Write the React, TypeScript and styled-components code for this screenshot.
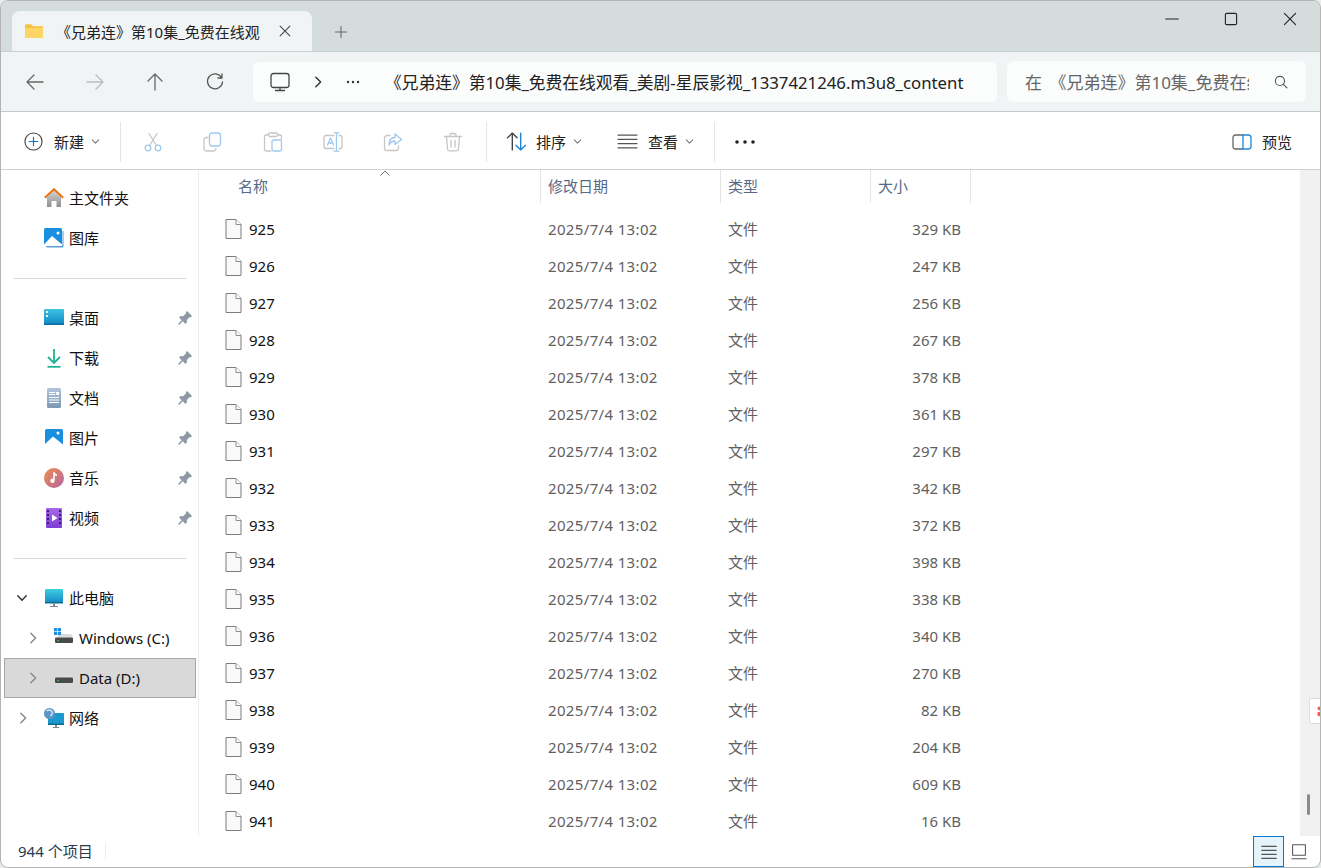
import React from 'react';
import styled, {createGlobalStyle} from 'styled-components';

const Global = createGlobalStyle`
    html, body {
        margin: 0;
        padding: 0;
        background: #e9ecec;
    }
    body {
        font-family: "Noto Sans", "Noto Sans CJK SC", sans-serif;
        font-size: 15px;
        color: #1a1a1a;
    }
`;

const Window = styled.div`
    box-sizing: border-box;
    width: 1321px;
    height: 868px;
    display: flex;
    flex-direction: column;
    border: 1px solid #b4b4b4;
    border-radius: 8px;
    overflow: hidden;
    background: #fff;
`;

const TitleBar = styled.div`
    height: 50px;
    flex: none;
    display: flex;
    align-items: flex-end;
    padding-left: 11px;
    background: #d4dcdc;
`;

const Tab = styled.div`
    width: 300px;
    height: 40px;
    display: flex;
    align-items: center;
    box-sizing: border-box;
    padding-left: 12px;
    background: #f0f4f5;
    border-radius: 8px 8px 0 0;
    font-size: 15px;
    color: #222;
`;

const TabTitle = styled.span`
    margin-left: 12px;
    width: 206px;
    white-space: nowrap;
    overflow: hidden;
`;

const TabClose = styled.span`
    margin-left: 16px;
    display: flex;
`;

const NewTab = styled.span`
    margin: 0 0 12px 22px;
    display: flex;
`;

const WindowControls = styled.div`
    margin-left: auto;
    margin-right: 1px;
    align-self: flex-start;
    display: flex;
    margin-top: 11px;
`;

const WindowControl = styled.span`
    width: 59px;
    height: 14px;
    display: flex;
    justify-content: center;
`;

const NavBar = styled.div`
    height: 61px;
    flex: none;
    box-sizing: border-box;
    display: flex;
    align-items: center;
    background: #f0f4f5;
    border-bottom: 1px solid #c6c9c9;
    border-top: 1px solid #c9d0d0;
    padding-left: 4px;
`;

const NavButton = styled.span`
    width: 60px;
    display: flex;
    justify-content: center;
`;

const AddressBox = styled.div`
    margin-left: 8px;
    width: 744px;
    height: 40px;
    box-sizing: border-box;
    display: flex;
    align-items: center;
    padding-left: 17px;
    background: #fbfcfc;
    border-radius: 6px;
`;

const AddressPart = styled.span<{$width: number}>`
    width: ${p => p.$width}px;
    flex: none;
    display: flex;
    justify-content: center;
`;

const AddressText = styled.span`
    margin-left: 25px;
    width: 580px;
    font-size: 16.75px;
    white-space: nowrap;
    overflow: hidden;
    color: #222;
`;

const SearchBox = styled.div`
    margin-left: 10px;
    width: 299px;
    height: 41px;
    box-sizing: border-box;
    display: flex;
    align-items: center;
    padding-left: 18px;
    background: #fbfcfc;
    border-radius: 6px;
`;

const SearchText = styled.span`
    width: 224px;
    font-size: 17px;
    word-spacing: 3px;
    white-space: nowrap;
    overflow: hidden;
    color: #666;
`;

const SearchIcon = styled.span`
    margin-left: 25px;
    display: flex;
`;

const Toolbar = styled.div`
    height: 58px;
    flex: none;
    box-sizing: border-box;
    display: flex;
    align-items: center;
    padding: 2px 0 0 23px;
    border-bottom: 1px solid #d0d2d2;
    font-size: 14px;
    color: #222;
`;

const ToolLabel = styled.span<{$gap: number}>`
    margin-left: ${p => p.$gap}px;
    font-size: 15px;
`;

const Caret = styled.span`
    margin-left: 7px;
    display: flex;
`;

const ToolDivider = styled.span<{$left: number; $right: number}>`
    width: 1px;
    height: 40px;
    flex: none;
    background: #e4e6e6;
    margin: 0 ${p => p.$right}px 0 ${p => p.$left}px;
`;

const ToolSlot = styled.span`
    width: 60px;
    flex: none;
    display: flex;
    justify-content: center;
`;

const ToolGroup = styled.span<{$left?: number}>`
    display: flex;
    align-items: center;
    margin-left: ${p => p.$left || 0}px;
`;

const PreviewGroup = styled.span`
    margin-left: auto;
    margin-right: 28px;
    display: flex;
    align-items: center;
`;

const Body = styled.div`
    flex: 1;
    min-height: 0;
    display: flex;
`;

const Sidebar = styled.nav`
    width: 198px;
    flex: none;
    box-sizing: border-box;
    padding: 8px 0 0 0;
    border-right: 1px solid #eeeeee;
    margin-bottom: 31px;
`;

const NavRow = styled.div<{$selected?: boolean; $level?: number}>`
    box-sizing: border-box;
    height: 40px;
    display: flex;
    align-items: center;
    margin: 0 2px 0 3px;
    padding-left: ${p => 39 + (p.$level || 0)}px;
    position: relative;
    font-size: 15px;
    color: #111;
    border: 1px solid ${p => (p.$selected ? '#a8a8a8' : 'transparent')};
    background: ${p => (p.$selected ? '#d9d9d9' : 'transparent')};
`;

const NavIcon = styled.span`
    width: 20px;
    height: 20px;
    flex: none;
    display: flex;
`;

const NavLabel = styled.span<{$latin?: boolean}>`
    margin-left: 5px;
    padding-bottom: ${p => (p.$latin ? 0 : 2)}px;
`;

const Pin = styled.span`
    position: absolute;
    left: 172px;
    top: 11px;
    display: flex;
`;

const Expander = styled.span<{$left: number}>`
    position: absolute;
    left: ${p => p.$left}px;
    top: 13px;
    display: flex;
`;

const NavDivider = styled.div`
    height: 1px;
    background: #d8d8d8;
    margin: 20px 12px 19px 13px;
`;

const Main = styled.main`
    flex: 1;
    min-width: 0;
    display: flex;
    flex-direction: column;
    height: 666px;
    overflow: hidden;
`;

const columns = 'grid-template-columns: 342px 180px 150px 100px;';

const HeaderRow = styled.div`
    height: 33px;
    flex: none;
    display: grid;
    ${columns}
    position: relative;
`;

const HeaderCell = styled.div<{$first?: boolean}>`
    box-sizing: border-box;
    display: flex;
    align-items: center;
    height: 33px;
    padding-left: ${p => (p.$first ? 39 : 7)}px;
    border-right: 1px solid #e5e5e5;
    font-size: 15px;
    color: #566a86;
    padding-bottom: 2px;
`;

const SortArrow = styled.span`
    position: absolute;
    left: 180px;
    top: 0;
    display: flex;
`;

const FileList = styled.div`
    padding-top: 7px;
`;

const FileRow = styled.div`
    height: 37px;
    display: grid;
    ${columns}
    align-items: center;
    font-size: 15px;
    color: #5f5f5f;
`;

const NameCell = styled.div`
    display: flex;
    align-items: center;
    padding-left: 26px;
    color: #111;
`;

const FileName = styled.span`
    margin-left: 7px;
`;

const DateCell = styled.div`
    padding-left: 7px;
    letter-spacing: 0.35px;
`;

const TypeCell = styled.div`
    padding-left: 7px;
`;

const SizeCell = styled.div`
    text-align: right;
    padding-right: 10px;
`;

const ScrollTrack = styled.div`
    width: 20px;
    flex: none;
    height: 666px;
    background: #f1f1f1;
    position: relative;
`;

const ScrollThumb = styled.div`
    position: absolute;
    left: 7px;
    top: 624px;
    width: 3px;
    height: 21px;
    border-radius: 2px;
    background: #8b8b8b;
`;

const FloatTab = styled.div`
    position: absolute;
    left: 9px;
    top: 528px;
    width: 14px;
    height: 26px;
    box-sizing: border-box;
    border: 1px solid #dcdcdc;
    border-radius: 2px 0 0 2px;
    background: #fff;
    display: flex;
    align-items: center;
    padding-left: 6px;
`;

const StatusBar = styled.div`
    position: absolute;
    left: 1px;
    bottom: 0;
    width: 1319px;
    height: 32px;
    display: flex;
    align-items: flex-start;
    font-size: 15px;
    color: #26394f;
    background: transparent;
`;

const StatusCount = styled.span`
    margin: 4px 0 0 17px;
`;

const StatusDivider = styled.span`
    margin: 7px 0 0 12px;
    width: 1px;
    height: 16px;
    background: #ececec;
`;

const ViewButtons = styled.span`
    margin-left: auto;
    margin-right: 13px;
    display: flex;
    align-items: center;
    gap: 7px;
`;

const ViewButton = styled.span<{$active?: boolean}>`
    box-sizing: border-box;
    width: 31px;
    height: 31px;
    display: flex;
    align-items: center;
    justify-content: center;
    border: 1px solid ${p => (p.$active ? '#0078d4' : 'transparent')};
    background: ${p => (p.$active ? '#e5f3fb' : 'transparent')};
`;

const Frame = styled.div`
    position: relative;
    width: 1321px;
    height: 868px;
`;

const line = {fill: 'none', strokeLinecap: 'round', strokeLinejoin: 'round'} as const;

const Stroke = ({size = 20, color = '#555', width = 1.3, children}: any) => (
    <svg width={size} height={size} viewBox="0 0 20 20" stroke={color} strokeWidth={width} {...line}>
        {children}
    </svg>
);

const Chevron = ({size = 10, color = '#777', dir = 'down'}: any) => (
    <svg width={size} height={size} viewBox="0 0 10 10" stroke={color} strokeWidth={1.2} {...line}>
        {dir === 'down' ? <path d="M1.5 3.2 5 6.8 8.5 3.2"/> : <path d="M3.2 1 7.2 5 3.2 9"/>}
    </svg>
);

const FolderIcon = () => (
    <svg width="20" height="20" viewBox="0 0 20 20">
        <path d="M1 4.5q0-1.2 1.2-1.2h5l1.8 2h9q1 0 1 1V16q0 1-1 1H2q-1 0-1-1z" fill="#f5c242"/>
        <path d="M1 7h18v9q0 1-1 1H2q-1 0-1-1z" fill="#fcd565"/>
    </svg>
);

const FileIcon = () => (
    <svg width="17" height="20" viewBox="0 0 17 20">
        <path d="M1 .5h10l5 5v14H1z" fill="#f9f9fa" stroke="#7d7d7d"/>
        <path d="M11 .5v5h5" fill="#fff" stroke="#8d8d8d"/>
    </svg>
);

const PinIcon = () => (
    <svg width="16" height="16" viewBox="0 0 16 16" fill="#8e98a4">
        <path d="M10 1 15 6 13.800 7.200 12.800 6.900 9.800 9.900 9.900 12.500 8.500 13.900 2.100 7.500 3.500 6.100 6.100 6.200 9.100 3.200 8.800 2.200z"/>
        <path d="M5.500 10.500 1.500 14.500" stroke="#8e98a4" strokeWidth="1.600"/>
    </svg>
);

const HomeIcon = () => (
    <svg width="20" height="20" viewBox="0 0 20 20">
        <defs>
            <linearGradient id="homeWall" x1="0" y1="0" x2="0" y2="1">
                <stop offset="0" stopColor="#d2d2d2"/>
                <stop offset="1" stopColor="#8f8f8f"/>
            </linearGradient>
        </defs>
        <path d="M3 9 10 2.500 17 9v10h-4.500v-6h-5v6H3z" fill="url(#homeWall)"/>
        <path d="M.8 9.800 10 1.200l9.200 8.600" fill="none" stroke="#e8720c" strokeWidth="2"/>
    </svg>
);

const PictureIcon = ({stack}: {stack?: boolean}) => (
    <svg width="20" height="20" viewBox="0 0 20 20">
        {stack && <path d="M2 17h16.500V3h1v15q0 1.500-1.500 1.500H3.500Q2 19.500 2 18z" fill="#5b9bd8"/>}
        <rect x={stack ? 0 : 1} y={stack ? 0 : 1} width={18} height={18} rx="1.500" fill="#1a8fe0"/>
        <path d={stack ? 'M0 16.500 8 8l10 8.500V18H0z' : 'M1 16 9 8.500 19 16.500V19H1z'} fill="#fff"/>
        <circle cx="14" cy={5} r="1.500" fill="#fff"/>
    </svg>
);

const DesktopIcon = () => (
    <svg width="20" height="20" viewBox="0 0 20 20">
        <defs>
            <linearGradient id="desk" x1="0" y1="0" x2="0" y2="1">
                <stop offset="0" stopColor="#3ec3e0"/>
                <stop offset="1" stopColor="#0f86c4"/>
            </linearGradient>
        </defs>
        <rect y="1" width="20" height="16" rx="1" fill="url(#desk)"/>
        <rect x="2" y="3" width="2" height="2" fill="#fff"/>
        <rect x="2" y="7" width="2" height="2" fill="#fff"/>
        <rect x="0" y="15.500" width="20" height="1.500" fill="#0b6da3"/>
    </svg>
);

const DownloadIcon = () => (
    <svg width="20" height="20" viewBox="0 0 20 20" fill="none" stroke="#1fb391" strokeWidth="1.800">
        <path d="M10 1v13M4 9l6 6 6-6"/>
        <path d="M3.500 18.800h13"/>
    </svg>
);

const DocumentIcon = () => (
    <svg width="20" height="20" viewBox="0 0 20 20">
        <defs>
            <linearGradient id="doc" x1="0" y1="0" x2="0" y2="1">
                <stop offset="0" stopColor="#b2c4da"/>
                <stop offset="1" stopColor="#7d98b5"/>
            </linearGradient>
        </defs>
        <rect x="3" width="14" height="20" rx="1.500" fill="url(#doc)"/>
        <g fill="#fff">
            <rect x="5" y="4" width="6" height="1"/>
            <rect x="5" y="6" width="6" height="1"/>
            <rect x="12" y="4" width="3" height="3"/>
            <rect x="5" y="9" width="10" height="1"/>
            <rect x="5" y="11.500" width="10" height="1"/>
            <rect x="5" y="14" width="10" height="1"/>
        </g>
    </svg>
);

const MusicIcon = () => (
    <svg width="20" height="20" viewBox="0 0 20 20">
        <defs>
            <linearGradient id="music" x1="0" y1="0" x2="1" y2="1">
                <stop offset="0" stopColor="#f08d4f"/>
                <stop offset="1" stopColor="#b4659f"/>
            </linearGradient>
        </defs>
        <circle cx="10" cy="10" r="10" fill="url(#music)"/>
        <path d="M10 4.500v7.500" stroke="#fff" strokeWidth="1.600"/>
        <path d="M10 4.500q.5 2.500 3 2.800" stroke="#fff" strokeWidth="1.600" fill="none"/>
        <circle cx="8.500" cy="12.800" r="2.200" fill="#fff"/>
    </svg>
);

const VideoIcon = () => (
    <svg width="20" height="20" viewBox="0 0 20 20">
        <defs>
            <linearGradient id="video" x1="0" y1="0" x2="0" y2="1">
                <stop offset="0" stopColor="#a668e8"/>
                <stop offset="1" stopColor="#7e3fd6"/>
            </linearGradient>
        </defs>
        <rect x="2" width="16" height="20" rx="1" fill="url(#video)"/>
        <path d="M8 6.500v7l5.500-3.500z" fill="#fff"/>
        <g fill="#3c1e78">
            <rect x="3" y="2" width="2" height="2"/>
            <rect x="3" y="6" width="2" height="2"/>
            <rect x="3" y="10" width="2" height="2"/>
            <rect x="3" y="14" width="2" height="2"/>
            <rect x="15" y="2" width="2" height="2"/>
            <rect x="15" y="6" width="2" height="2"/>
            <rect x="15" y="10" width="2" height="2"/>
            <rect x="15" y="14" width="2" height="2"/>
        </g>
    </svg>
);

const ComputerIcon = () => (
    <svg width="20" height="20" viewBox="0 0 20 20">
        <defs>
            <linearGradient id="screen" x1="0" y1="0" x2="0" y2="1">
                <stop offset="0" stopColor="#3fd0e2"/>
                <stop offset="1" stopColor="#1488c6"/>
            </linearGradient>
        </defs>
        <rect x="1" y="1" width="18" height="14" rx="1" fill="url(#screen)"/>
        <rect x="1" y="14" width="18" height="1.500" fill="#0e6c8f"/>
        <path d="M9 15.500h2v2.500h3v1H6v-1h3z" fill="#7a8a96"/>
    </svg>
);

const DriveIcon = ({windows}: {windows?: boolean}) => (
    <svg width="20" height="20" viewBox="0 0 20 20">
        <path d="M3 9.500 5 6h12l2 3.500z" fill="#dcdcdc"/>
        <rect x="1" y="9.500" width="18" height="5.500" rx="1" fill="#4a4a4a"/>
        <rect x="3.500" y="12" width="1.500" height="1.200" fill="#3ad25a"/>
        {windows && (
            <g fill="#1d8fe1">
                <rect x="0" y="0" width="3.200" height="3.200"/>
                <rect x="3.800" y="0" width="3.200" height="3.200"/>
                <rect x="0" y="3.800" width="3.200" height="3.200"/>
                <rect x="3.800" y="3.800" width="3.200" height="3.200"/>
            </g>
        )}
    </svg>
);

const NetworkIcon = () => (
    <svg width="20" height="20" viewBox="0 0 20 20">
        <rect x="4" y="5" width="16" height="12" rx="1" fill="#1c9ad0"/>
        <rect x="4" y="15.500" width="16" height="1.500" fill="#0d6a8d"/>
        <path d="M11 17h2v2h2v1H9v-1h2z" fill="#7a8a96"/>
        <circle cx="5.500" cy="5.500" r="5.500" fill="#5d96c8"/>
        <path d="M2.500 3q3-2 5 0t-1 5" fill="none" stroke="#dbeaf5" strokeWidth="1.300"/>
    </svg>
);

const blue = '#9ec9ee';
const grey = '#c6c6c6';

const ToolIcons = [
    <Stroke key="cut" color={blue}>
        <circle cx="5" cy="16" r="2.800"/>
        <circle cx="15" cy="16" r="2.800"/>
        <path d="M6.500 13.500 14 1.500M13.500 13.500 6 1.500" stroke={grey}/>
    </Stroke>,
    <Stroke key="copy" color={grey}>
        <path d="M5 5.500H3.500A2.500 2.500 0 0 0 1 8v8.500A2.500 2.500 0 0 0 3.500 19h7a2.500 2.500 0 0 0 2.500-2.500"/>
        <rect x="6.500" y="1" width="11" height="13" rx="2.500" stroke={blue}/>
    </Stroke>,
    <Stroke key="paste" color={grey}>
        <path d="M5 3H3a1.500 1.500 0 0 0-1.500 1.500v13A1.500 1.500 0 0 0 3 19h5M15 3h2a1.500 1.500 0 0 1 1.500 1.500V7"/>
        <rect x="5.500" y="1" width="9" height="3.500" rx="1.500"/>
        <rect x="9" y="8" width="9.500" height="11" rx="1.500" stroke={blue}/>
    </Stroke>,
    <Stroke key="rename" color={grey}>
        <path d="M11 3.500H3A2 2 0 0 0 1 5.500v9a2 2 0 0 0 2 2h8M16 3.500h1a2 2 0 0 1 2 2v9a2 2 0 0 1-2 2h-1"/>
        <path d="M11 .8h5M11 19.200h5M13.500 .8v18.400" stroke={blue}/>
        <path d="M4.500 13 7.500 6l3 7M5.500 11h4" stroke={blue}/>
    </Stroke>,
    <Stroke key="share" color={grey}>
        <path d="M7 3.500H4A2.500 2.500 0 0 0 1.500 6v10A2.500 2.500 0 0 0 4 18.500h9a2.500 2.500 0 0 0 2.500-2.500v-2"/>
        <path d="M12 2v3.500C8 5.500 6 8.500 6 13c1.500-3 3.500-4 6-4v3.500l6.500-5z" stroke={blue}/>
    </Stroke>,
    <Stroke key="trash" color={grey}>
        <path d="M1.500 4.500h17M7 4.500V3a1.500 1.500 0 0 1 1.500-1.500h3A1.500 1.500 0 0 1 13 3v1.500"/>
        <path d="M3.500 4.500 4.500 17a2 2 0 0 0 2 1.800h7a2 2 0 0 0 2-1.800l1-12.500"/>
        <path d="M8 8.500v6.500M12 8.500v6.500"/>
    </Stroke>,
];

const files = [
    ['925', '329 KB'], ['926', '247 KB'], ['927', '256 KB'], ['928', '267 KB'], ['929', '378 KB'],
    ['930', '361 KB'], ['931', '297 KB'], ['932', '342 KB'], ['933', '372 KB'], ['934', '398 KB'],
    ['935', '338 KB'], ['936', '340 KB'], ['937', '270 KB'], ['938', '82 KB'], ['939', '204 KB'],
    ['940', '609 KB'], ['941', '16 KB'],
];

const pinned = [
    {label: '桌面', icon: <DesktopIcon/>},
    {label: '下载', icon: <DownloadIcon/>},
    {label: '文档', icon: <DocumentIcon/>},
    {label: '图片', icon: <PictureIcon/>},
    {label: '音乐', icon: <MusicIcon/>},
    {label: '视频', icon: <VideoIcon/>},
];

export default function App() {
    return (
        <Frame>
            <Global/>
            <Window>
                <TitleBar>
                    <Tab>
                        <FolderIcon/>
                        <TabTitle>《兄弟连》第10集_免费在线观</TabTitle>
                        <TabClose>
                            <Stroke size={14} color="#444" width={1.5}>
                                <path d="M3 3l14 14M17 3 3 17"/>
                            </Stroke>
                        </TabClose>
                    </Tab>
                    <NewTab>
                        <Stroke size={14} color="#666" width={1.5}>
                            <path d="M10 2v16M2 10h16"/>
                        </Stroke>
                    </NewTab>
                    <WindowControls>
                        <WindowControl>
                            <Stroke size={14} color="#222" width={1.6}>
                                <path d="M1 10h18"/>
                            </Stroke>
                        </WindowControl>
                        <WindowControl>
                            <Stroke size={14} color="#222" width={1.6}>
                                <rect x="2" y="2" width="16" height="16" rx="2"/>
                            </Stroke>
                        </WindowControl>
                        <WindowControl>
                            <Stroke size={14} color="#222" width={1.6}>
                                <path d="M2 2l16 16M18 2 2 18"/>
                            </Stroke>
                        </WindowControl>
                    </WindowControls>
                </TitleBar>
                <NavBar>
                    <NavButton>
                        <Stroke color="#666"><path d="M18 10H2M9 3l-7 7 7 7"/></Stroke>
                    </NavButton>
                    <NavButton>
                        <Stroke color="#bbb"><path d="M2 10h16M11 3l7 7-7 7"/></Stroke>
                    </NavButton>
                    <NavButton>
                        <Stroke color="#666"><path d="M10 18V2M3 9l7-7 7 7"/></Stroke>
                    </NavButton>
                    <NavButton>
                        <Stroke color="#555">
                            <path d="M16.500 5.500A7.500 7.500 0 1 0 17.500 10M17 2v4h-4"/>
                        </Stroke>
                    </NavButton>
                    <AddressBox>
                        <AddressPart $width={20}>
                            <Stroke color="#444">
                                <rect x="1" y="1.500" width="18" height="14" rx="2.500"/>
                                <path d="M10 15.500v3M5.500 18.500h9"/>
                            </Stroke>
                        </AddressPart>
                        <AddressPart $width={56}>
                            <Chevron size={12} color="#333" dir="right"/>
                        </AddressPart>
                        <AddressPart $width={14}>
                            <svg width="14" height="4" viewBox="0 0 14 4" fill="#333">
                                <circle cx="2" cy="2" r="1.200"/>
                                <circle cx="7" cy="2" r="1.200"/>
                                <circle cx="12" cy="2" r="1.200"/>
                            </svg>
                        </AddressPart>
                        <AddressText>《兄弟连》第10集_免费在线观看_美剧-星辰影视_1337421246.m3u8_content</AddressText>
                    </AddressBox>
                    <SearchBox>
                        <SearchText>在 《兄弟连》第10集_免费在线观看</SearchText>
                        <SearchIcon>
                            <Stroke size={14} color="#555" width={1.6}>
                                <circle cx="8.500" cy="8.500" r="6.500"/>
                                <path d="M13 13l5.500 5.500"/>
                            </Stroke>
                        </SearchIcon>
                    </SearchBox>
                </NavBar>
                <Toolbar>
                    <ToolGroup>
                        <Stroke size={19} color="#444" width={1.2}>
                            <circle cx="10" cy="10" r="9"/>
                            <path d="M10 5.500v9M5.500 10h9" stroke="#0a74c9"/>
                        </Stroke>
                        <ToolLabel $gap={11}>新建</ToolLabel>
                        <Caret><Chevron size={9}/></Caret>
                    </ToolGroup>
                    <ToolDivider $left={20} $right={2}/>
                    {ToolIcons.map(icon => <ToolSlot key={icon.key}>{icon}</ToolSlot>)}
                    <ToolDivider $left={3} $right={19}/>
                    <ToolGroup>
                        <Stroke size={21} color="#444">
                            <path d="M6 18V2M1.500 6.500 6 2l4.500 4.500"/>
                            <path d="M14 2v16M9.500 13.500 14 18l4.500-4.500" stroke="#1a86da"/>
                        </Stroke>
                        <ToolLabel $gap={9}>排序</ToolLabel>
                        <Caret><Chevron size={9}/></Caret>
                    </ToolGroup>
                    <ToolGroup $left={35}>
                        <Stroke size={21} color="#555" width={1.2}>
                            <path d="M1 4h18M1 8h18M1 12h18M1 16h18"/>
                        </Stroke>
                        <ToolLabel $gap={10}>查看</ToolLabel>
                        <Caret><Chevron size={9}/></Caret>
                    </ToolGroup>
                    <ToolDivider $left={20} $right={20}/>
                    <svg width="20" height="4" viewBox="0 0 20 4" fill="#222">
                        <circle cx="2" cy="2" r="1.800"/>
                        <circle cx="10" cy="2" r="1.800"/>
                        <circle cx="18" cy="2" r="1.800"/>
                    </svg>
                    <PreviewGroup>
                        <svg width="20" height="16" viewBox="0 0 20 16" fill="none">
                            <path d="M11 1H3.500A2.500 2.500 0 0 0 1 3.500v9A2.500 2.500 0 0 0 3.500 15H11" stroke="#666" strokeWidth="1.300"/>
                            <path d="M11 1h5.500A2.500 2.500 0 0 1 19 3.500v9a2.500 2.500 0 0 1-2.500 2.500H11z" stroke="#1a86da" strokeWidth="1.300"/>
                        </svg>
                        <ToolLabel $gap={10}>预览</ToolLabel>
                    </PreviewGroup>
                </Toolbar>
                <Body>
                    <Sidebar>
                        <NavRow>
                            <NavIcon><HomeIcon/></NavIcon>
                            <NavLabel>主文件夹</NavLabel>
                        </NavRow>
                        <NavRow>
                            <NavIcon><PictureIcon stack/></NavIcon>
                            <NavLabel>图库</NavLabel>
                        </NavRow>
                        <NavDivider/>
                        {pinned.map(item => (
                            <NavRow key={item.label}>
                                <NavIcon>{item.icon}</NavIcon>
                                <NavLabel>{item.label}</NavLabel>
                                <Pin><PinIcon/></Pin>
                            </NavRow>
                        ))}
                        <NavDivider/>
                        <NavRow>
                            <Expander $left={11}><Chevron size={12} color="#333"/></Expander>
                            <NavIcon><ComputerIcon/></NavIcon>
                            <NavLabel>此电脑</NavLabel>
                        </NavRow>
                        <NavRow $level={10}>
                            <Expander $left={22}><Chevron size={12} color="#888" dir="right"/></Expander>
                            <NavIcon><DriveIcon windows/></NavIcon>
                            <NavLabel $latin>Windows (C:)</NavLabel>
                        </NavRow>
                        <NavRow $level={10} $selected>
                            <Expander $left={22}><Chevron size={12} color="#888" dir="right"/></Expander>
                            <NavIcon><DriveIcon/></NavIcon>
                            <NavLabel $latin>Data (D:)</NavLabel>
                        </NavRow>
                        <NavRow>
                            <Expander $left={12}><Chevron size={12} color="#888" dir="right"/></Expander>
                            <NavIcon><NetworkIcon/></NavIcon>
                            <NavLabel>网络</NavLabel>
                        </NavRow>
                    </Sidebar>
                    <Main>
                        <HeaderRow>
                            <HeaderCell $first>名称</HeaderCell>
                            <HeaderCell>修改日期</HeaderCell>
                            <HeaderCell>类型</HeaderCell>
                            <HeaderCell>大小</HeaderCell>
                            <SortArrow>
                                <svg width="12" height="7" viewBox="0 0 12 7" fill="none" stroke="#777">
                                    <path d="M1.500 5.500 6 1l4.500 4.500"/>
                                </svg>
                            </SortArrow>
                        </HeaderRow>
                        <FileList>
                            {files.map(([name, size]) => (
                                <FileRow key={name}>
                                    <NameCell>
                                        <FileIcon/>
                                        <FileName>{name}</FileName>
                                    </NameCell>
                                    <DateCell>2025/7/4 13:02</DateCell>
                                    <TypeCell>文件</TypeCell>
                                    <SizeCell>{size}</SizeCell>
                                </FileRow>
                            ))}
                        </FileList>
                    </Main>
                    <ScrollTrack>
                        <FloatTab>
                            <svg width="7" height="12" viewBox="0 0 7 12" fill="#f0633a">
                                <circle cx="4" cy="3" r="2.200"/>
                                <circle cx="4" cy="9.500" r="2.600"/>
                            </svg>
                        </FloatTab>
                        <ScrollThumb/>
                    </ScrollTrack>
                </Body>
            </Window>
            <StatusBar>
                <StatusCount>944 个项目</StatusCount>
                <StatusDivider/>
                <ViewButtons>
                    <ViewButton $active>
                        <Stroke size={16} color="#555" width={1.4}>
                            <path d="M1 3h18M1 8h18M1 13h18M1 18h18"/>
                        </Stroke>
                    </ViewButton>
                    <Stroke size={16} color="#555" width={1.3}>
                        <rect x="2" y="1" width="16" height="13"/>
                        <path d="M1 18.500h18"/>
                    </Stroke>
                </ViewButtons>
            </StatusBar>
        </Frame>
    );
}
